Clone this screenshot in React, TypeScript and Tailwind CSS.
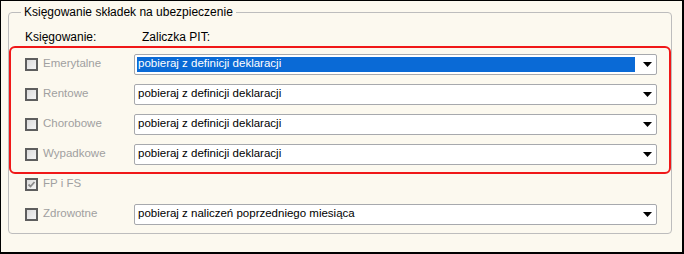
import React from 'react';

const font = { fontFamily: '"Liberation Sans", Tahoma, sans-serif' };

function Checkbox({ checked }: { checked?: boolean }) {
  return (
    <span className="relative w-[13px] h-[13px] border-2 border-[#5e5e5e] bg-gradient-to-br from-[#dcdcdc] to-[#f4f4f4] shrink-0">
      {checked && (
        <svg className="absolute left-[0px] top-[0px]" width="9" height="9" viewBox="0 0 9 9">
          <path d="M1.5 4.5 L3.5 6.5 L7.5 2" stroke="#8a8a8a" strokeWidth="1.8" fill="none" />
        </svg>
      )}
    </span>
  );
}

function Combo({ text, selected }: { text: string; selected?: boolean }) {
  return (
    <div className="w-[523px] h-[21px] bg-white border border-[#a7a9ad] rounded-[2px] flex items-center pl-[2px] pr-[3px]">
      <div
        className={
          selected
            ? 'flex-1 h-[15px] bg-[#0a6ad6] text-white flex items-center pl-[1px]'
            : 'flex-1 h-[15px] text-black flex items-center pl-[1px]'
        }
      >
        {text}
      </div>
      <div className="w-[18px] flex justify-end pr-[1px]">
        <svg width="9" height="5" viewBox="0 0 9 5">
          <path d="M0 0 H9 L4.5 5 Z" fill="#000" />
        </svg>
      </div>
    </div>
  );
}

function Row({ label, checked, combo, selected }: { label: string; checked?: boolean; combo?: string; selected?: boolean }) {
  return (
    <div className="h-[30px] flex items-center">
      <div className="w-[115px] flex items-center gap-[5px] pl-[6px]">
        <Checkbox checked={checked} />
        <span className="text-[#a0a0a0]">{label}</span>
      </div>
      {combo && <Combo text={combo} selected={selected} />}
    </div>
  );
}

export default function App() {
  const def = 'pobieraj z definicji deklaracji';
  return (
    <div className="relative w-[684px] h-[254px] bg-[#fcf9ef] border border-black border-r-2 border-b-2 text-[11.5px] text-black" style={font}>
      <fieldset className="ml-[7px] mr-[10px] mt-[4px] h-[229px] border border-[#bdbdbd] rounded-[4px] pl-[10px]">
        <legend className="ml-[2px] px-[3px] text-[12px] leading-[14px]">Księgowanie składek na ubezpieczenie</legend>
        <div className="h-[24px] flex items-center mt-[6px]">
          <span className="w-[123px] pl-[6px] text-[12px]">Księgowanie:</span>
          <span className="text-[12px]">Zaliczka PIT:</span>
        </div>
        <div>
          <Row label="Emerytalne" combo={def} selected />
          <Row label="Rentowe" combo={def} />
          <Row label="Chorobowe" combo={def} />
          <Row label="Wypadkowe" combo={def} />
          <Row label="FP i FS" checked />
          <Row label="Zdrowotne" combo="pobieraj z naliczeń poprzedniego miesiąca" />
        </div>
      </fieldset>
      <div className="absolute left-[8px] top-[45px] w-[662px] h-[128px] border-2 border-[#f01818] rounded-[6px] pointer-events-none" />
    </div>
  );
}
